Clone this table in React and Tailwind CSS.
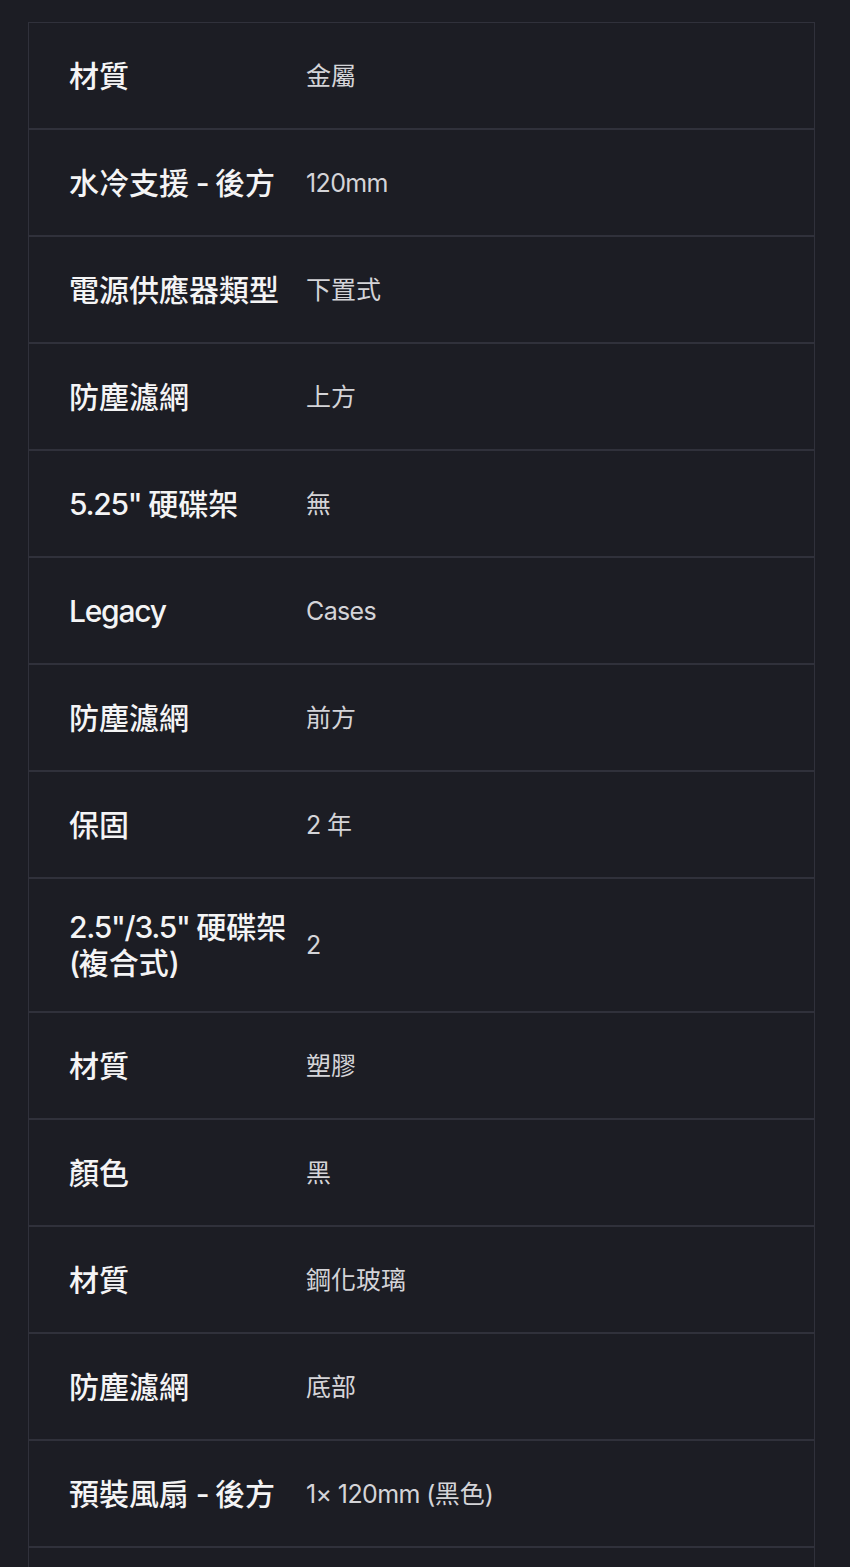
const specs = [
  ["材質", "金屬"],
  ["水冷支援 - 後方", "120mm"],
  ["電源供應器類型", "下置式"],
  ["防塵濾網", "上方"],
  ['5.25" 硬碟架', "無"],
  ["Legacy", "Cases"],
  ["防塵濾網", "前方"],
  ["保固", "2 年"],
  ['2.5"/3.5" 硬碟架 (複合式)', "2"],
  ["材質", "塑膠"],
  ["顏色", "黑"],
  ["材質", "鋼化玻璃"],
  ["防塵濾網", "底部"],
  ["預裝風扇 - 後方", "1× 120mm (黑色)"],
  ["", ""],
];

// latin runs in the reference are set tighter than the CJK ones
function Runs({ text, tight }) {
  return text.split(/([\u3000-\u9fff\uff00-\uffef]+)/).map((part, i) =>
    i % 2 === 1 ? (
      <span key={i}>{part}</span>
    ) : (
      <span key={i} className={tight}>
        {part}
      </span>
    )
  );
}

export default function App() {
  return (
    <div
      className="min-h-screen bg-[#1c1d24] pt-[22px] pl-[28px]"
      style={{ fontFamily: 'Inter, "Noto Sans CJK TC", sans-serif' }}
    >
      <div className="w-[787px] border-x border-t border-[#30313b]">
        {specs.map(([label, value], i) => (
          <div
            key={i}
            className="grid grid-cols-[237px_1fr] items-center min-h-[107px] py-[30px] pl-10 pr-6 border-b-2 border-[#30313b]"
          >
            <div className="text-[30px] leading-[36px] font-medium text-[#f4f4f5]">
              <Runs text={label} tight="tracking-[-0.042em]" />
            </div>
            <div className="text-[25px] leading-[32px] text-[#d4d4d8]">
              <Runs text={value} tight="tracking-[-0.025em]" />
            </div>
          </div>
        ))}
      </div>
    </div>
  );
}
